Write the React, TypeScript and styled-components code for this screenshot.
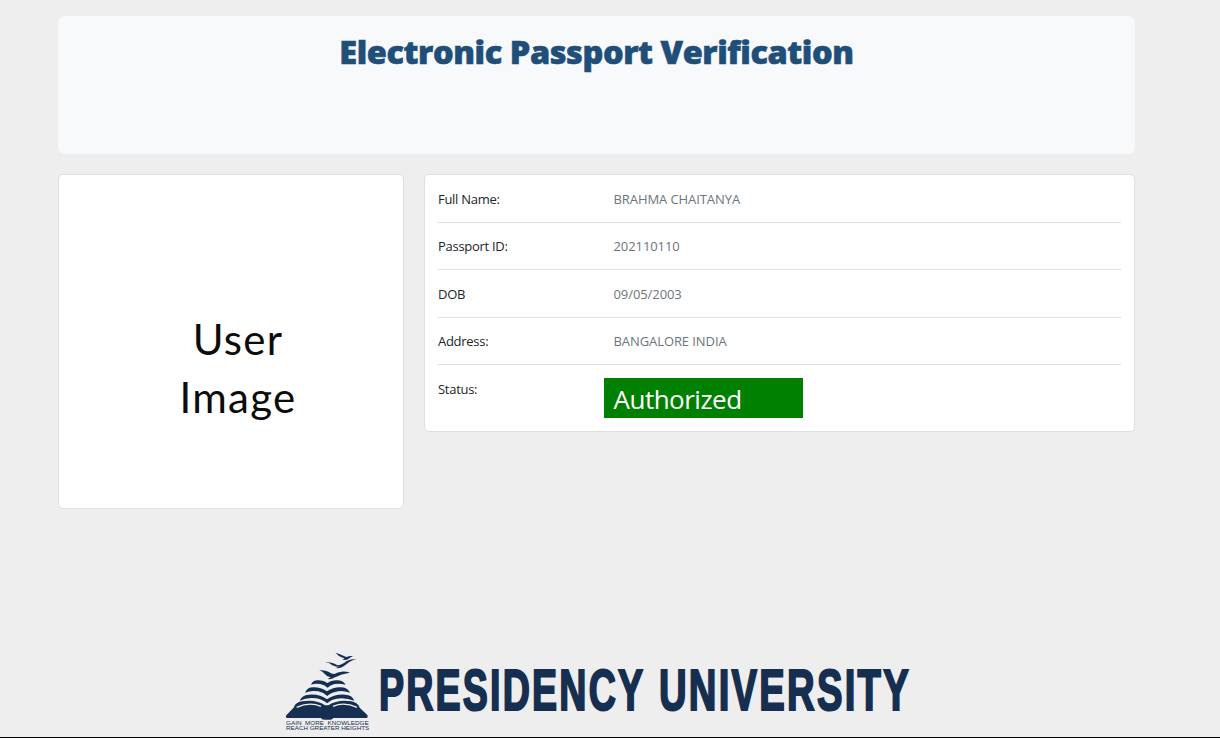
import React from "react";
import styled, { createGlobalStyle } from "styled-components";

const GlobalStyle = createGlobalStyle`
  * { box-sizing: border-box; }
  body { margin: 0; background: #eeeeee; font-family: "Open Sans", "Noto Sans", sans-serif; }
`;

const Page = styled.div`
  height: 738px;
  padding: 16px 85px 0 58px;
  border-bottom: 1px solid #000;
  display: flex;
  flex-direction: column;
  overflow: hidden;
`;

const Header = styled.header`
  height: 138px;
  flex: none;
  border-radius: 7px;
  background: #f8f9fb;
  display: flex;
  justify-content: center;
`;

const Title = styled.h1`
  margin: 13px 0 0;
  font-size: 32.5px;
  line-height: 45px;
  font-weight: 800;
  letter-spacing: -0.43px;
  -webkit-text-stroke: 0.6px #1f4e79;
  color: #1f4e79;
  white-space: nowrap;
`;

const Columns = styled.main`
  margin-top: 20px;
  display: flex;
  align-items: flex-start;
  gap: 20px;
  height: 472px;
  flex: none;
`;

const Card = styled.section`
  background: #fff;
  border: 1px solid #dfdfdf;
  border-radius: 5px;
`;

const PhotoCard = styled(Card)`
  width: 346px;
  height: 335px;
  padding: 136px 0 0 14px;
  text-align: center;
  font-family: Lato, sans-serif;
  font-size: 42px;
  line-height: 57.5px;
  letter-spacing: 1.3px;
  color: #0c0c0c;
`;

const DetailsCard = styled(Card)`
  flex: 1;
  height: 258px;
  padding: 0 13px;
`;

const Row = styled.div`
  display: flex;
  height: 47.5px;
  padding-top: 13.8px;
  font-size: 13px;
  line-height: 20px;
  border-bottom: 1px solid #e0e0e0;
  &:last-child { border-bottom: 0; }
`;

const Label = styled.div`
  width: 175.5px;
  color: #212529;
  letter-spacing: -0.28px;
`;

const Value = styled.div`
  color: #6c757d;
  letter-spacing: -0.08px;
`;

const Badge = styled.div`
  width: 199.5px;
  height: 40px;
  margin: -0.8px 0 0 -10px;
  padding-left: 10px;
  background: #008000;
  color: #fff;
  font-size: 26px;
  line-height: 43px;
  letter-spacing: -0.5px;
`;

const Footer = styled.footer`
  display: flex;
  margin-left: 212px;
  flex: none;
`;

const NAVY = "#162e4f";

const rows = [
  ["Full Name:", "BRAHMA CHAITANYA"],
  ["Passport ID:", "202110110"],
  ["DOB", "09/05/2003"],
  ["Address:", "BANGALORE INDIA"],
];

const Emblem = () => (
  <svg width="100" height="91" viewBox="0 18 300 273" fill={NAVY}>
    <path d="M196 38 Q208 41 220 47 Q225 50 230 51 Q239 47 249 49 Q240 52 235 57 Q228 61 218 59 L224 55 Q213 52 206 47 Q202 42 196 38Z" />
    <path d="M165 67 Q182 65 194 71 Q202 78 211 74 Q223 70 230 63 Q241 57 259 57 Q244 61 238 66 Q230 72 222 78 Q214 86 197 84 L207 80 Q195 81 186 75 Q178 68 165 67Z" />
    <path d="M148 91 Q164 89 175 95 Q185 102 193 102 Q203 96 215 95 Q228 94 240 98 Q224 101 213 104 Q203 109 195 112 Q187 119 173 117 L182 112 Q171 110 165 103 Q158 94 148 91Z" />
    <path d="M123 134 Q128 121 143 121 Q161 120 172 129 Q184 120 201 121 Q219 121 227 134 Q208 129 194 132 Q180 136 173 143 Q165 135 151 132 Q136 129 123 134Z" />
    <path d="M105 158 Q112 142 129 142 Q151 141 171 154 Q191 141 212 142 Q232 142 240 158 Q216 150 198 155 Q180 159 172 168 Q161 158 145 154 Q124 150 105 158Z" />
    <path d="M89 182 Q96 165 116 164 Q149 161 171 178 Q192 162 226 164 Q246 164 253 182 Q224 171 200 176 Q181 180 171 190 Q159 179 139 175 Q112 171 89 182Z" />
    <path d="M72 202 Q75 188 96 184 Q139 178 165 196 L175 196 Q202 178 244 184 Q264 188 269 203 L292 225 Q295 231 291 234 L190 234 Q188 239 180 239 H163 Q155 239 153 234 H51 Q45 232 49 226Z" />
    <path fill="none" stroke="#eeeeee" strokeWidth="4" d="M80 202 Q119 184 153 199M189 199 Q222 184 261 202" />
  </svg>
);

const Motto = styled.div`
  position: absolute;
  left: 15.5px;
  top: 74.5px;
  width: 83px;
`;

const MottoLine = styled.div<{ $stretch: number }>`
  font-family: "Liberation Sans", sans-serif;
  font-size: 5.2px;
  line-height: 5.6px;
  white-space: pre;
  width: max-content;
  transform: scaleX(${(p) => p.$stretch});
  transform-origin: left;
  color: ${NAVY};
`;

const EmblemBox = styled.div`
  position: relative;
  width: 108.5px;
  height: 91px;
`;

const Word = styled.div<{ $width: number; $squeeze: number }>`
  width: ${(p) => p.$width}px;
  height: 91px;
  padding-top: 13px;
  font: 700 56.5px/64px "Liberation Sans", sans-serif;
  letter-spacing: 3.3px;
  font-kerning: none;
  white-space: nowrap;
  color: ${NAVY};
  -webkit-text-stroke: 2.1px ${NAVY};
  transform: scaleX(${(p) => p.$squeeze});
  transform-origin: left;
`;

export default function App() {
  return (
    <>
      <GlobalStyle />
      <Page>
        <Header>
          <Title>Electronic Passport Verification</Title>
        </Header>
        <Columns>
          <PhotoCard>
            User
            <br />
            Image
          </PhotoCard>
          <DetailsCard>
            {rows.map(([label, value]) => (
              <Row key={label}>
                <Label>{label}</Label>
                <Value>{value}</Value>
              </Row>
            ))}
            <Row>
              <Label>Status:</Label>
              <Badge>Authorized</Badge>
            </Row>
          </DetailsCard>
        </Columns>
        <Footer>
          <EmblemBox>
            <Emblem />
            <Motto>
              <MottoLine $stretch={1.22}>GAIN  MORE  KNOWLEDGE</MottoLine>
              <MottoLine $stretch={1.21}>REACH GREATER HEIGHTS</MottoLine>
            </Motto>
          </EmblemBox>
          <Word $width={280} $squeeze={0.665}>PRESIDENCY</Word>
          <Word $width={252} $squeeze={0.677}>UNIVERSITY</Word>
        </Footer>
      </Page>
    </>
  );
}
